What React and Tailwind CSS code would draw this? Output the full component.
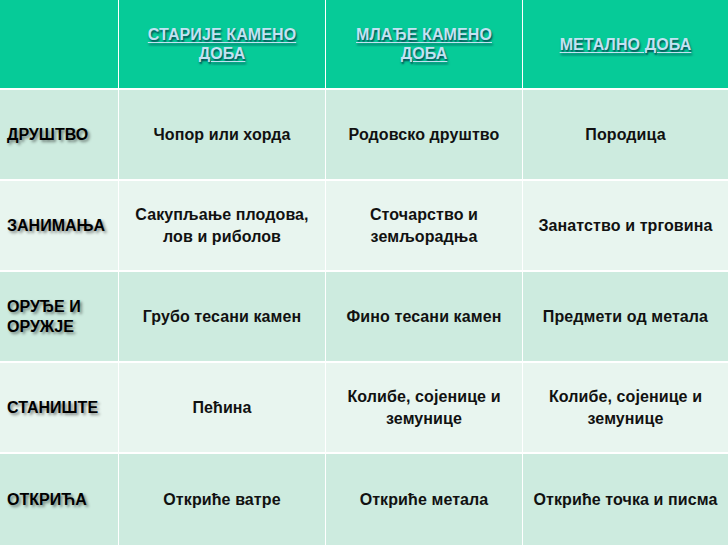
import React from "react";

const headers = [
  ["СТАРИЈЕ КАМЕНО", "ДОБА"],
  ["МЛАЂЕ КАМЕНО", "ДОБА"],
  ["МЕТАЛНО ДОБА"],
];

const rows = [
  { label: ["ДРУШТВО"], cells: [["Чопор или хорда"], ["Родовско друштво"], ["Породица"]] },
  { label: ["ЗАНИМАЊА"], cells: [["Сакупљање плодова,", "лов и риболов"], ["Сточарство и", "земљорадња"], ["Занатство и трговина"]] },
  { label: ["ОРУЂЕ И", "ОРУЖЈЕ"], cells: [["Грубо тесани камен"], ["Фино тесани камен"], ["Предмети од метала"]] },
  { label: ["СТАНИШТЕ"], cells: [["Пећина"], ["Колибе, сојенице и", "земунице"], ["Колибе, сојенице и", "земунице"]] },
  { label: ["ОТКРИЋА"], cells: [["Откриће ватре"], ["Откриће метала"], ["Откриће точка и писма"]] },
];

function Lines({ lines }) {
  return lines.map((l, i) => <div key={i} className="whitespace-nowrap">{l}</div>);
}

export default function App() {
  return (
    <div
      className="w-[728px] h-[545px] bg-white grid grid-cols-[118px_206px_196px_205px] grid-rows-[88px_89px_89px_89px_89px_1fr] gap-x-[1px] gap-y-[2px] text-[16px] font-bold leading-[22px] tracking-[0.1px]"
      style={{ fontFamily: '"Liberation Sans", Arial, sans-serif' }}
    >
      <div className="bg-[#06cb98]" />
      {headers.map((h, i) => (
        <div
          key={i}
          className="bg-[#06cb98] flex flex-col items-center justify-center text-center text-[#c3e2f2] underline decoration-1 underline-offset-2 [text-shadow:1px_2px_2px_rgba(0,40,60,0.8)] leading-[19px]"
        >
          <Lines lines={h} />
        </div>
      ))}
      {rows.map((r, ri) => {
        const bg = ri % 2 === 0 ? "bg-[#cdebdf]" : "bg-[#e8f5ef]";
        return (
          <React.Fragment key={ri}>
            <div className={`${bg} flex flex-col justify-center pl-[7px] text-[16px] tracking-normal leading-[20px] text-black [text-shadow:2px_2px_3px_rgba(0,0,0,0.45)]`}>
              <Lines lines={r.label} />
            </div>
            {r.cells.map((c, ci) => (
              <div key={ci} className={`${bg} flex flex-col items-center justify-center text-center text-[#111]`}>
                <Lines lines={c} />
              </div>
            ))}
          </React.Fragment>
        );
      })}
    </div>
  );
}
